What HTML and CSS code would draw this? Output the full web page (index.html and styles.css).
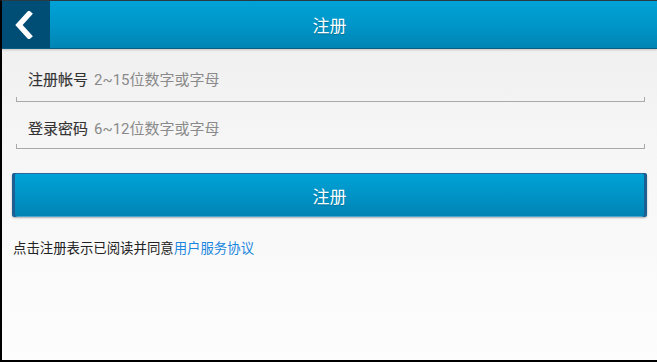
FILE: index.html
```html
<!DOCTYPE html>
<html>
<head>
<meta charset="utf-8">
<link rel="stylesheet" href="styles.css">
</head>
<body>
<div class="screen">
  <header class="topbar">
    <div class="back">
      <svg width="20" height="28" viewBox="0 0 20 28"><path d="M15 3 L5 14 L15 25" fill="none" stroke="#fff" stroke-width="5.5" stroke-linecap="square" stroke-linejoin="miter"/></svg>
    </div>
    <div class="title">注册</div>
  </header>
  <main class="content">
    <div class="field">
      <span class="label">注册帐号</span><span class="hint">2~15位数字或字母</span>
    </div>
    <div class="field">
      <span class="label">登录密码</span><span class="hint">6~12位数字或字母</span>
    </div>
    <button class="submit">注册</button>
    <p class="agree">点击注册表示已阅读并同意<a class="link">用户服务协议</a></p>
  </main>
</div>
</body>
</html>
```
FILE: styles.css
```css
html, body {
  margin: 0;
  padding: 0;
  background: #000;
}
body {
  width: 657px;
  height: 362px;
  overflow: hidden;
  font-family: "Noto Sans CJK SC", "Roboto", sans-serif;
}
.screen {
  box-sizing: border-box;
  width: 657px;
  height: 362px;
  border-left: 2px solid #000;
  border-bottom: 2px solid #000;
  border-top: 1px solid #2a3a44;
  display: flex;
  flex-direction: column;
  background: linear-gradient(#ededed, #f6f6f6 40%, #fdfdfd);
}
.topbar {
  height: 47px;
  display: flex;
  align-items: stretch;
  background: linear-gradient(#00a2d6, #0096c9 50%, #0085b4);
  box-shadow: 0 1px 0 #0a5f82, 0 2px 2px rgba(0,0,0,0.18);
  position: relative;
  z-index: 1;
}
.back {
  width: 48px;
  background: #004e75;
  display: flex;
  align-items: center;
  justify-content: center;
}
.back svg { display: block; margin-left: -4px; }
.title {
  flex: 1;
  display: flex;
  align-items: center;
  justify-content: center;
  color: #fff;
  font-size: 17px;
  text-shadow: 0 1px 1px rgba(0,0,0,0.25);
  padding-right: 48px;
}
.content {
  flex: 1;
  padding: 0 12px 0 14px;
  display: flex;
  flex-direction: column;
}
.field {
  height: 47px;
  box-sizing: border-box;
  padding: 15px 0 0 12px;
  border-bottom: 1px solid #a9a9a9;
  position: relative;
  line-height: 20px;
  width: 629px;
}
.field:first-child { height: 54px; padding-top: 20px; }
.field::before, .field::after {
  content: "";
  position: absolute;
  bottom: 0;
  width: 1px;
  height: 4px;
  background: #a9a9a9;
}
.field::before { left: 0; }
.field::after { right: 0; }
.label {
  font-size: 15px;
  color: #333;
  font-weight: 400;
  -webkit-text-stroke: 0.15px #333;
  margin-right: 6px;
}
.hint {
  font-family: "Roboto", "Noto Sans CJK SC", sans-serif;
  font-size: 15px;
  color: #8a8a8a;
}
.submit {
  margin: 24px 0 0 -4px;
  width: 635px;
  height: 44px;
  border: none;
  border-radius: 3px;
  background: linear-gradient(#00a4d8, #0093c6 50%, #0083b3);
  box-shadow: inset 3px 0 0 #1e5f93, inset -3px 0 0 #1e5f93, inset 0 1px 0 #2b6aa0, inset 0 -1px 0 #4aa6cf, 0 1px 2px rgba(0,0,0,0.3);
  color: #fff;
  font-family: "Noto Sans CJK SC", sans-serif;
  font-size: 17px;
  padding: 0;
  text-shadow: 0 1px 1px rgba(0,0,0,0.2);
}
.agree {
  margin: 20px 0 0 -3px;
  font-size: 13.4px;
  color: #222;
  line-height: 20px;
}
.link {
  color: #1a86de;
}
```
